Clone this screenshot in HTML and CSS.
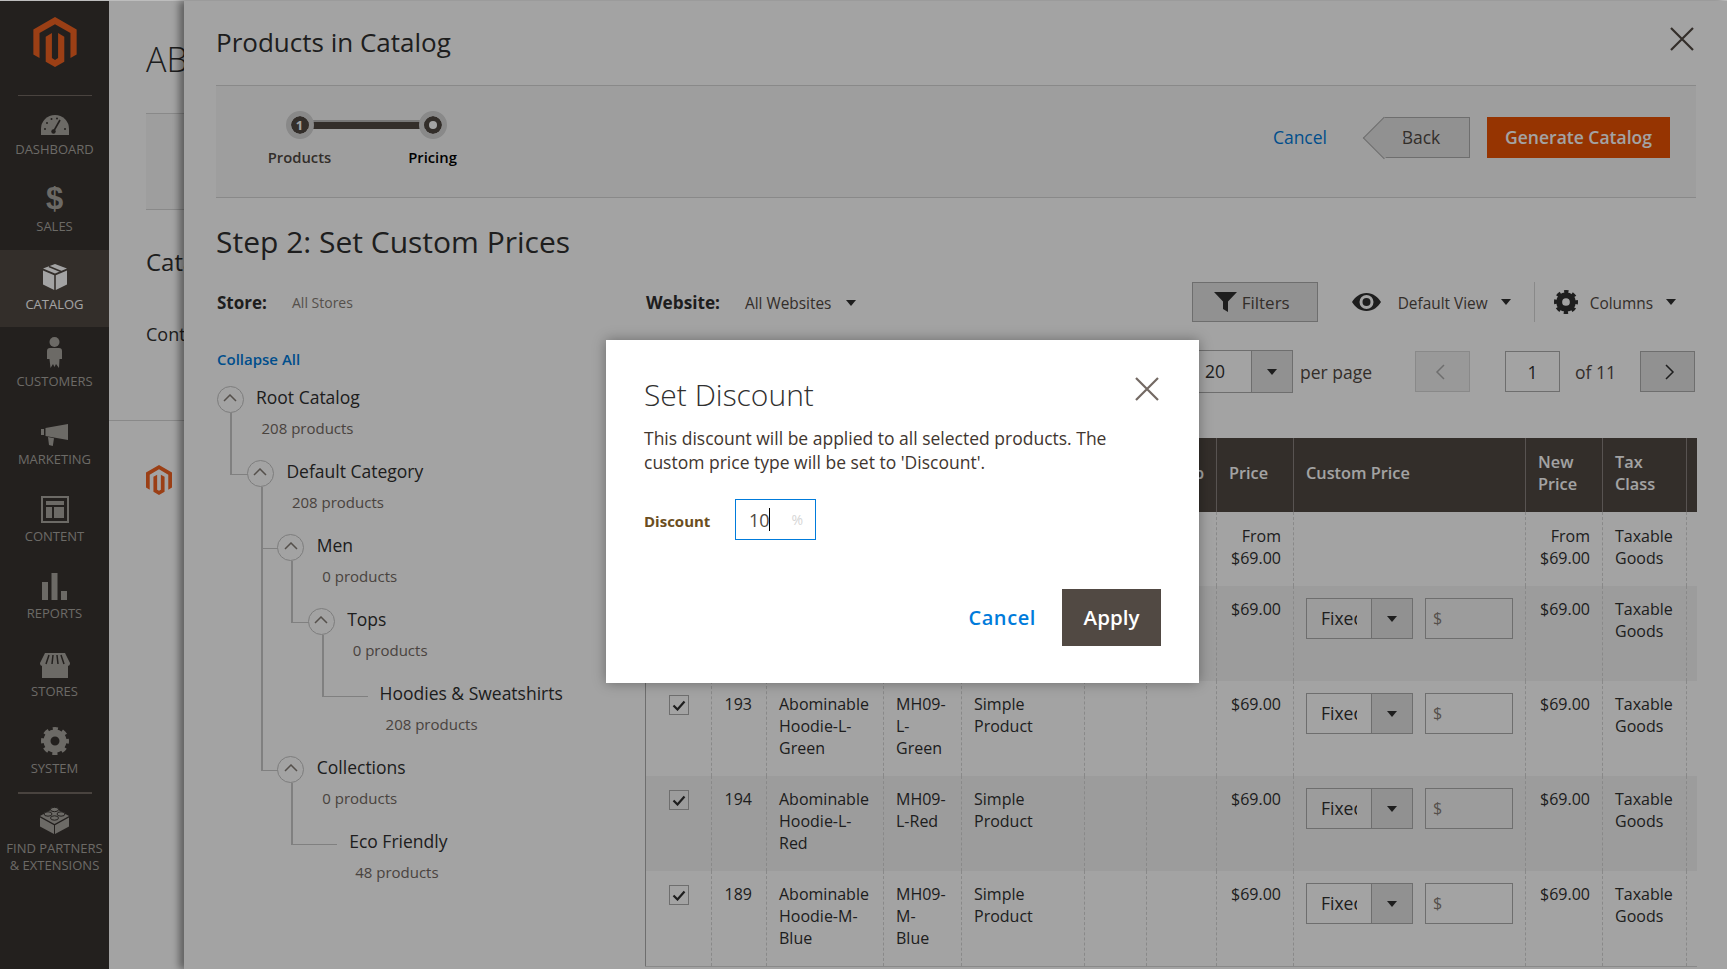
FILE: index.html
```html
<!DOCTYPE html>
<html>
<head>
  <meta charset="UTF-8">
  <title>Products in Catalog</title>
  <link rel="stylesheet" href="styles.css">
</head>
<body>
<div class="screen">
  <div class="topline"></div>
  <div class="layout">
    <!-- menu -->
    <nav class="sidebar">
      <div class="logo">
        <svg width="44" height="50" viewBox="1.6 0 20.8 24"><path fill="#f26322" d="M12 24l-4.455-2.572v-12l2.97-1.715v12.001l1.485.902 1.485-.902V7.713l2.97 1.715v12L12 24zM22.391 6v12l-2.97 1.714V7.713L12 3.43 4.574 7.713v12L1.609 18V6L12 0l10.391 6z"/></svg>
      </div>
      <a class="menu-item">
        <span class="menu-icon icon-up"><svg width="28" height="20" viewBox="0 0 28 20"><path fill="currentColor" d="M14 0A14 14 0 0 0 0 14v6h28v-6A14 14 0 0 0 14 0z"/><path stroke="#373330" stroke-width="1.6" d="M12.5 16.5L19 5"/><circle cx="12.5" cy="16.5" r="2.2" fill="#373330"/><g fill="#373330"><circle cx="4" cy="14" r="1"/><circle cx="6" cy="8" r="1"/><circle cx="10.500" cy="4" r="1"/><circle cx="16" cy="3.500" r="1"/><circle cx="24" cy="14" r="1"/></g></svg></span>
        <span class="menu-label">Dashboard</span>
      </a>
      <a class="menu-item">
        <span class="menu-icon"><span class="dollar">$</span></span>
        <span class="menu-label">Sales</span>
      </a>
      <a class="menu-item active">
        <span class="menu-icon icon-up"><svg width="24" height="26" viewBox="0 0 24 26"><path fill="currentColor" d="M12 0l12 4.500-12 5-12-5zM0 6.500l11.200 4.700V26L0 20.500zM24 6.500l-11.200 4.700V26L24 20.500z"/><path stroke="#514943" stroke-width="1.5" d="M6 2.500l12 5"/></svg></span>
        <span class="menu-label">Catalog</span>
      </a>
      <a class="menu-item">
        <span class="menu-icon"><svg width="15" height="31" viewBox="0 0 15 31"><circle cx="7.500" cy="5" r="5" fill="currentColor"/><path fill="currentColor" d="M3 11h9q3 0 3 3v8h-2.500L12 31l-3-4-1.500 3-1.500-3-2.500 4-1-9H0v-8q0-3 3-3z"/></svg></span>
        <span class="menu-label">Customers</span>
      </a>
      <a class="menu-item">
        <span class="menu-icon"><svg width="27" height="22" viewBox="0 0 27 22"><path fill="currentColor" d="M0 5h3v6H0zM4.500 4L27 0v16L4.500 12zM7 13l6 1.200-1.200 7.800-3.800-1z"/></svg></span>
        <span class="menu-label">Marketing</span>
      </a>
      <a class="menu-item">
        <span class="menu-icon"><svg width="28" height="27" viewBox="0 0 28 27"><path fill="currentColor" fill-rule="evenodd" d="M0 0h28v27H0zM2 2v23h24V2z"/><path fill="currentColor" d="M5 5h18v4H5zM5 11h6v11H5zM13 11h10v11H13z"/></svg></span>
        <span class="menu-label">Content</span>
      </a>
      <a class="menu-item">
        <span class="menu-icon"><svg width="25" height="27" viewBox="0 0 25 27"><path fill="currentColor" d="M0 9h6v18H0zM9.500 0h6v27h-6zM19 18h6v9h-6z"/></svg></span>
        <span class="menu-label">Reports</span>
      </a>
      <a class="menu-item">
        <span class="menu-icon"><svg width="30" height="25" viewBox="0 0 30 25"><path fill="currentColor" d="M2 12h26v13H2zM5 0h20l5 10q0 3-2.500 3h-25Q0 13 0 10z"/><path stroke="#373330" stroke-width="1.5" fill="none" d="M9 2L6 11M13 2l-1 9M17 2l1 9M21 2l3 9"/></svg></span>
        <span class="menu-label">Stores</span>
      </a>
      <a class="menu-item">
        <span class="menu-icon"><svg width="28" height="28" viewBox="0 0 28 28"><circle cx="14" cy="14" r="8" fill="none" stroke="currentColor" stroke-width="7"/><circle cx="14" cy="14" r="12" fill="none" stroke="currentColor" stroke-width="4" stroke-dasharray="5 4.420" stroke-dashoffset="2.500"/></svg></span>
        <span class="menu-label">System</span>
      </a>
      <a class="menu-item partners">
        <span class="menu-icon"><svg width="29" height="28" viewBox="0 0 29 28"><path fill="currentColor" d="M14.500 2L29 10 14.500 18 0 10zM0 11.500l14 7.800V28L0 20.500zM29 11.500l-14 7.800V28l14-7.500z"/><g fill="currentColor" stroke="#373330"><ellipse cx="14.500" cy="3.500" rx="4" ry="2.200"/><ellipse cx="8" cy="8" rx="4" ry="2.200"/><ellipse cx="21" cy="8" rx="4" ry="2.200"/><ellipse cx="14.500" cy="12" rx="4" ry="2.200"/></g></svg></span>
        <span class="menu-label">Find Partners<br>&amp; Extensions</span>
      </a>
    </nav>

    <!-- page under the slide panel -->
    <div class="behind">
      <h1 class="behind-title">ABC</h1>
      <div class="behind-box"></div>
      <h2 class="behind-sub">Catalog</h2>
      <p class="behind-text">Content</p>
      <div class="behind-footer">
        <svg width="26" height="30" viewBox="1.6 0 20.8 24"><path fill="#f26322" d="M12 24l-4.455-2.572v-12l2.97-1.715v12.001l1.485.902 1.485-.902V7.713l2.97 1.715v12L12 24zM22.391 6v12l-2.97 1.714V7.713L12 3.43 4.574 7.713v12L1.609 18V6L12 0l10.391 6z"/></svg>
      </div>
    </div>
  </div>

  <!-- slide panel -->
  <section class="panel">
    <header class="panel-head">
      <div class="panel-title">Products in Catalog</div>
      <svg class="panel-close" width="24" height="24" viewBox="0 0 24 24"><path d="M1 1l22 22M23 1L1 23" stroke="#514943" stroke-width="2.200" fill="none"/></svg>
    </header>

    <div class="steps-bar">
      <div class="steps">
        <div class="step done">
          <span class="step-dot"><span class="step-num">1</span></span>
          <span class="step-name">Products</span>
        </div>
        <div class="step current">
          <span class="step-dot"><span class="step-hole"></span></span>
          <span class="step-name">Pricing</span>
        </div>
      </div>
      <div class="step-actions">
        <a class="link-cancel">Cancel</a>
        <button class="btn-back">Back</button>
        <button class="btn-generate">Generate Catalog</button>
      </div>
    </div>

    <h2 class="step-title">Step 2: Set Custom Prices</h2>

    <div class="columns">
      <div class="col-tree">
        <div class="store-row">
          <b class="store-label">Store:</b>
          <span class="store-value">All Stores</span>
        </div>
        <a class="collapse-all">Collapse All</a>

        <ul class="tree">
          <li class="node">
            <div class="node-row"><span class="toggle"><svg width="14" height="8" viewBox="0 0 14 8"><path d="M1 7l6-6 6 6" fill="none" stroke="currentColor" stroke-width="1.500"/></svg></span><span class="node-name">Root Catalog</span></div>
            <div class="node-count">208 products</div>
            <ul class="tree-sub">
              <li class="node">
                <div class="node-row"><span class="toggle"><svg width="14" height="8" viewBox="0 0 14 8"><path d="M1 7l6-6 6 6" fill="none" stroke="currentColor" stroke-width="1.500"/></svg></span><span class="node-name">Default Category</span></div>
                <div class="node-count">208 products</div>
                <ul class="tree-sub">
                  <li class="node">
                    <div class="node-row"><span class="toggle"><svg width="14" height="8" viewBox="0 0 14 8"><path d="M1 7l6-6 6 6" fill="none" stroke="currentColor" stroke-width="1.500"/></svg></span><span class="node-name">Men</span></div>
                    <div class="node-count">0 products</div>
                    <ul class="tree-sub">
                      <li class="node">
                        <div class="node-row"><span class="toggle"><svg width="14" height="8" viewBox="0 0 14 8"><path d="M1 7l6-6 6 6" fill="none" stroke="currentColor" stroke-width="1.500"/></svg></span><span class="node-name">Tops</span></div>
                        <div class="node-count">0 products</div>
                        <ul class="tree-sub">
                          <li class="node leaf">
                            <div class="node-row"><span class="node-name">Hoodies &amp; Sweatshirts</span></div>
                            <div class="node-count">208 products</div>
                          </li>
                        </ul>
                      </li>
                    </ul>
                  </li>
                  <li class="node">
                    <div class="node-row"><span class="toggle"><svg width="14" height="8" viewBox="0 0 14 8"><path d="M1 7l6-6 6 6" fill="none" stroke="currentColor" stroke-width="1.500"/></svg></span><span class="node-name">Collections</span></div>
                    <div class="node-count">0 products</div>
                    <ul class="tree-sub">
                      <li class="node leaf">
                        <div class="node-row"><span class="node-name">Eco Friendly</span></div>
                        <div class="node-count">48 products</div>
                      </li>
                    </ul>
                  </li>
                </ul>
              </li>
            </ul>
          </li>
        </ul>
      </div>

      <div class="col-grid">
        <div class="toolbar">
          <b class="website-label">Website:</b>
          <span class="website-value">All Websites</span>
          <span class="caret website-caret"></span>
          <button class="btn-filters">
            <svg width="23" height="20" viewBox="0 0 23 20"><path fill="#303030" d="M0 0h23l-9 9.500V20l-5-3V9.500z"/></svg>
            Filters
          </button>
          <svg class="eye" width="29" height="18" viewBox="0 0 29 18"><path fill="#303030" fill-rule="evenodd" d="M14.500 0C8 0 3 4 0 9c3 5 8 9 14.500 9S26 14 29 9c-3-5-8-9-14.500-9zM14.500 2a7 7 0 1 1 0 14 7 7 0 0 1 0-14z"/><circle cx="14.500" cy="9" r="4" fill="#303030"/></svg>
          <span class="tool-text view-text">Default View</span>
          <span class="caret"></span>
          <span class="tool-divider"></span>
          <svg width="24" height="24" viewBox="0 0 28 28"><circle cx="14" cy="14" r="8" fill="none" stroke="#303030" stroke-width="7"/><circle cx="14" cy="14" r="12" fill="none" stroke="#303030" stroke-width="4" stroke-dasharray="5 4.420" stroke-dashoffset="2.500"/></svg>
          <span class="tool-text columns-text">Columns</span>
          <span class="caret"></span>
        </div>

        <div class="pager">
          <div class="per-page-select">
            <span class="per-page-value">20</span>
            <span class="select-arrow"><span class="caret"></span></span>
          </div>
          <span class="pager-text per-page">per page</span>
          <button class="pager-btn prev"><svg width="10" height="16" viewBox="0 0 10 16"><path d="M9 1L2 8l7 7" fill="none" stroke="#adadad" stroke-width="1.500"/></svg></button>
          <span class="page-input">1</span>
          <span class="pager-text page-of">of 11</span>
          <button class="pager-btn next"><svg width="10" height="16" viewBox="0 0 10 16"><path d="M1 1l7 7-7 7" fill="none" stroke="#303030" stroke-width="1.500"/></svg></button>
        </div>

        <table class="grid">
          <colgroup>
            <col style="width:66px"><col style="width:55px"><col style="width:117px"><col style="width:78px"><col style="width:123px"><col style="width:62px"><col style="width:70px"><col style="width:77px"><col style="width:232px"><col style="width:77px"><col style="width:84px"><col style="width:10px">
          </colgroup>
          <thead>
            <tr>
              <th></th><th></th><th></th><th></th><th></th><th></th><th>Group</th><th>Price</th><th>Custom Price</th><th>New Price</th><th>Tax Class</th><th></th>
            </tr>
          </thead>
          <tbody>
            <tr class="parent-row">
              <td></td><td></td><td></td><td></td><td></td><td></td><td></td>
              <td class="num">From $69.00</td><td></td><td class="num">From $69.00</td><td>Taxable Goods</td><td></td>
            </tr>
            <tr class="alt">
              <td></td><td></td><td></td><td></td><td></td><td></td><td></td>
              <td class="num">$69.00</td>
              <td><div class="price-edit"><span class="price-type"><span class="price-type-text">Fixed</span><span class="select-arrow"><span class="caret"></span></span></span><span class="price-input">$</span></div></td>
              <td class="num">$69.00</td><td>Taxable Goods</td><td></td>
            </tr>
            <tr>
              <td class="check-cell"><span class="check"><svg width="14" height="11" viewBox="0 0 14 11"><path d="M1.500 5.500L5.500 9.500 12.500 1.500" fill="none" stroke="#303030" stroke-width="2.200"/></svg></span></td>
              <td class="num id-cell">193</td><td>Abominable Hoodie-L-Green</td><td class="sku-cell">MH09-L-Green</td><td class="type-cell">Simple Product</td><td></td><td></td>
              <td class="num">$69.00</td>
              <td><div class="price-edit"><span class="price-type"><span class="price-type-text">Fixed</span><span class="select-arrow"><span class="caret"></span></span></span><span class="price-input">$</span></div></td>
              <td class="num">$69.00</td><td>Taxable Goods</td><td></td>
            </tr>
            <tr class="alt">
              <td class="check-cell"><span class="check"><svg width="14" height="11" viewBox="0 0 14 11"><path d="M1.500 5.500L5.500 9.500 12.500 1.500" fill="none" stroke="#303030" stroke-width="2.200"/></svg></span></td>
              <td class="num id-cell">194</td><td>Abominable Hoodie-L-Red</td><td class="sku-cell">MH09-L-Red</td><td class="type-cell">Simple Product</td><td></td><td></td>
              <td class="num">$69.00</td>
              <td><div class="price-edit"><span class="price-type"><span class="price-type-text">Fixed</span><span class="select-arrow"><span class="caret"></span></span></span><span class="price-input">$</span></div></td>
              <td class="num">$69.00</td><td>Taxable Goods</td><td></td>
            </tr>
            <tr>
              <td class="check-cell"><span class="check"><svg width="14" height="11" viewBox="0 0 14 11"><path d="M1.500 5.500L5.500 9.500 12.500 1.500" fill="none" stroke="#303030" stroke-width="2.200"/></svg></span></td>
              <td class="num id-cell">189</td><td>Abominable Hoodie-M-Blue</td><td class="sku-cell">MH09-M-Blue</td><td class="type-cell">Simple Product</td><td></td><td></td>
              <td class="num">$69.00</td>
              <td><div class="price-edit"><span class="price-type"><span class="price-type-text">Fixed</span><span class="select-arrow"><span class="caret"></span></span></span><span class="price-input">$</span></div></td>
              <td class="num">$69.00</td><td>Taxable Goods</td><td></td>
            </tr>
          </tbody>
        </table>
      </div>
    </div>
  </section>

  <div class="overlay"></div>

  <!-- discount popup -->
  <div class="dialog">
    <svg class="dialog-close" width="24" height="24" viewBox="0 0 24 24"><path d="M1 1l22 22M23 1L1 23" stroke="#736963" stroke-width="2.200" fill="none"/></svg>
    <h3 class="dialog-title">Set Discount</h3>
    <p class="dialog-text">This discount will be applied to all selected products. The custom price type will be set to 'Discount'.</p>
    <div class="dialog-field">
      <label class="dialog-label">Discount</label>
      <div class="discount-input">
        <span class="discount-value">10</span>
        <span class="discount-cursor"></span>
        <span class="discount-unit">%</span>
      </div>
    </div>
    <div class="dialog-actions">
      <a class="dialog-cancel">Cancel</a>
      <button class="btn-apply">Apply</button>
    </div>
  </div>
</div>
</body>
</html>
```

FILE: styles.css
```css
* {
  box-sizing: border-box;
}

html, body {
  margin: 0;
  padding: 0;
  height: 100%;
}

body {
  font-family: "Open Sans", "Noto Sans", sans-serif;
  color: #303030;
  background: #fff;
}

.screen {
  position: relative;
  width: 1727px;
  height: 969px;
  overflow: hidden;
  background: #fff;
}

.topline {
  height: 1px;
  background: #bdbdbd;
}

.layout {
  display: flex;
  height: 968px;
}

/* menu */
.sidebar {
  width: 109px;
  flex-shrink: 0;
  background: #373330;
  color: #aaa6a0;
}

.logo {
  height: 94px;
  padding-top: 16px;
}

.logo svg {
  display: block;
  margin: 0 auto;
}

.logo::after {
  content: "";
  display: block;
  width: 74px;
  height: 1px;
  margin: 28px auto 0;
  background: #736963;
}

.menu-item {
  display: flex;
  flex-direction: column;
  align-items: center;
  height: 77.4px;
}

.menu-item.active {
  background: #514943;
  color: #fff;
}

.menu-icon {
  height: 41px;
  flex-shrink: 0;
  display: flex;
  align-items: flex-end;
  justify-content: center;
}

.menu-icon.icon-up {
  padding-bottom: 1px;
}

.menu-label {
  flex-shrink: 0;
  font-size: 13px;
  line-height: 27.5px;
  text-transform: uppercase;
  text-align: center;
  white-space: nowrap;
}

.dollar {
  font-family: "Liberation Sans", sans-serif;
  font-weight: 700;
  font-size: 31px;
  line-height: 31px;
  margin-bottom: -1px;
}

.menu-item.partners {
  border-top: 2px solid #736963;
  width: 74px;
  height: auto;
  margin: 0 auto;
}

.partners .menu-icon {
  height: 40px;
}

.partners .menu-label {
  line-height: 17px;
  margin-top: 6px;
}

/* page behind the panel */
.behind {
  flex: 1;
  padding-left: 37px;
  position: relative;
}

.behind-title {
  margin: 36px 0 0;
  font-size: 34px;
  line-height: 44px;
  font-weight: 300;
}

.behind-box {
  height: 97px;
  margin-top: 32px;
  background: #f8f8f8;
  border-top: 1px solid #d6d6d6;
  border-bottom: 1px solid #d6d6d6;
}

.behind-sub {
  margin: 35px 0 0;
  font-size: 24px;
  line-height: 34px;
  font-weight: 400;
}

.behind-text {
  margin: 43px 0 0;
  font-size: 18px;
  line-height: 24px;
}

.behind-footer {
  margin: 74px 0 0 -37px;
  padding: 44px 0 0 37px;
  border-top: 1px solid #d6d6d6;
}

/* slide panel */
.panel {
  position: absolute;
  z-index: 0;
  left: 184px;
  right: 0;
  top: 1px;
  bottom: 0;
  padding: 0 31px 0 32px;
  background: #fff;
  box-shadow: -5px 0 7px rgba(0, 0, 0, .4);
}

.panel-head {
  height: 84px;
  display: flex;
  justify-content: space-between;
  padding-top: 24px;
}

.panel-title {
  font-size: 26px;
  line-height: 34px;
}

.panel-close {
  margin: 2px 2px 0 0;
}

.steps-bar {
  height: 113px;
  display: flex;
  justify-content: space-between;
  background: #f8f8f8;
  border-top: 1px solid #d6d6d6;
  border-bottom: 1px solid #d6d6d6;
}

.steps {
  display: flex;
  margin: 25px 0 0 17px;
}

.step {
  width: 133px;
  display: flex;
  flex-direction: column;
  align-items: center;
  position: relative;
}

.step.done::after {
  content: "";
  position: absolute;
  left: 66px;
  top: 11px;
  width: 133px;
  height: 7px;
  background: #514943;
  box-shadow: 0 -2px 0 #bbb;
}

.step-dot {
  width: 28px;
  height: 28px;
  border-radius: 50%;
  background: #514943;
  border: 5px solid #d6d6d6;
  background-clip: padding-box;
  display: flex;
  align-items: center;
  justify-content: center;
  position: relative;
  z-index: 1;
}

.step-num {
  color: #fff;
  font-size: 13px;
  font-weight: 700;
  line-height: 18px;
}

.step-hole {
  width: 8px;
  height: 8px;
  border-radius: 50%;
  background: #fff;
}

.step-name {
  margin-top: 8px;
  font-size: 14.8px;
  line-height: 20px;
  font-weight: 600;
  color: #514943;
}

.step.current .step-name {
  color: #000;
}

.step-actions {
  display: flex;
  align-items: flex-start;
  padding: 31px 26px 0 0;
}

.link-cancel {
  font-size: 17.5px;
  line-height: 40px;
  font-weight: 500;
  color: #007bdb;
  margin-right: 57px;
}

.btn-back {
  position: relative;
  width: 86px;
  height: 41px;
  padding: 0 11px 2px 0;
  border: 1px solid #adadad;
  border-left: 0;
  background: #e3e3e3;
  color: #514943;
  font: 400 17.5px "Open Sans", sans-serif;
  margin-right: 17px;
}

.btn-back::before {
  content: "";
  position: absolute;
  left: -15px;
  top: 4.5px;
  width: 29px;
  height: 29px;
  background: #e3e3e3;
  border-left: 1px solid #adadad;
  border-bottom: 1px solid #adadad;
  transform: rotate(45deg);
}

.btn-generate {
  width: 183px;
  height: 41px;
  padding: 0 0 2px;
  border: 0;
  background: #eb5202;
  color: #fff;
  font: 600 17.5px "Open Sans", sans-serif;
}

.step-title {
  margin: 24px 0 20px;
  font-size: 30px;
  line-height: 40px;
  font-weight: 400;
}

.columns {
  display: flex;
}

/* category tree */
.col-tree {
  width: 429px;
  flex-shrink: 0;
}

.store-row {
  height: 40px;
  display: flex;
  align-items: center;
}

.store-label {
  font-size: 17px;
  font-weight: 700;
  width: 75px;
  margin-left: 1px;
}

.store-value {
  font-size: 14px;
  color: #857d76;
}

.collapse-all {
  display: block;
  margin: 27px 0 0 1px;
  font-size: 15px;
  line-height: 20px;
  font-weight: 600;
  color: #007bdb;
}

.tree, .tree-sub {
  list-style: none;
  margin: 0;
  padding: 0;
}

.tree {
  margin: 16px 0 0 0.5px;
}

.node {
  position: relative;
}

.tree-sub .node {
  margin-left: 30.4px;
}

.node-row {
  height: 28px;
  display: flex;
  align-items: center;
}

.toggle {
  width: 27px;
  height: 27px;
  flex-shrink: 0;
  border: 1.5px solid #c4c4c4;
  border-radius: 50%;
  color: #857d76;
  display: flex;
  align-items: center;
  justify-content: center;
  padding-bottom: 3px;
  background: #fff;
  position: relative;
  z-index: 1;
}

.node-name {
  margin-left: 12.5px;
  font-size: 17.5px;
  line-height: 28px;
  white-space: nowrap;
  position: relative;
  top: -2px;
}

.node-count {
  height: 46px;
  padding: 3px 0 0 45px;
  font-size: 15px;
  line-height: 24px;
  color: #736963;
}

.leaf .node-name {
  margin-left: 41.5px;
}

.leaf .node-count {
  padding-left: 47.5px;
}

/* connector lines of the tree */
.tree-sub .node::before {
  content: "";
  position: absolute;
  left: -16.5px;
  top: -46px;
  width: 17px;
  height: 61px;
  border-left: 2px solid #c8c8c8;
  border-bottom: 1px solid #c8c8c8;
}

.tree-sub .node + .node::before {
  top: 0;
  height: 15px;
}

.tree-sub .node:not(:last-child)::after {
  content: "";
  position: absolute;
  left: -16.5px;
  top: 0;
  bottom: 0;
  border-left: 2px solid #c8c8c8;
}

.tree-sub .leaf::before {
  width: 44px;
}

/* grid side */
.col-grid {
  flex: 1;
  min-width: 0;
}

.toolbar {
  height: 40px;
  display: flex;
  align-items: center;
}

.website-label {
  font-size: 17.2px;
  font-weight: 700;
  margin-left: 1px;
  width: 99px;
}

.website-value {
  padding-top: 2px;
  font-size: 15.4px;
  color: #514943;
}

.caret {
  display: inline-block;
  width: 0;
  height: 0;
  border-left: 5px solid transparent;
  border-right: 5px solid transparent;
  border-top: 6px solid #303030;
}

.website-caret {
  margin: 2px 0 0 15px;
}

.btn-filters {
  margin-left: auto;
  width: 126px;
  height: 40px;
  display: flex;
  align-items: center;
  justify-content: center;
  gap: 5px;
  border: 1px solid #adadad;
  background: #e3e3e3;
  color: #514943;
  font: 400 17px "Open Sans", sans-serif;
  padding: 0 6px 0 0;
}

.eye {
  margin: 0 17px 0 34px;
}

.tool-text {
  padding-top: 2px;
  font-size: 15.4px;
  color: #514943;
}

.view-text {
  margin-right: 13px;
}

.tool-divider {
  width: 1px;
  height: 40px;
  margin: 0 19px 0 23px;
  background: #d6d6d6;
}

.columns-text {
  margin: 0 13px 0 12px;
}

.toolbar > .caret:last-child {
  margin-right: 20px;
}

.pager {
  height: 43px;
  margin-top: 28px;
  display: flex;
  align-items: center;
  padding-left: 548px;
}

.per-page-select {
  width: 100px;
  height: 43px;
  display: flex;
  justify-content: space-between;
  border: 1px solid #adadad;
}

.per-page-value {
  font-size: 17.5px;
  line-height: 41px;
  padding-left: 11px;
}

.select-arrow {
  width: 41px;
  display: flex;
  align-items: center;
  justify-content: center;
  background: #e3e3e3;
  border-left: 1px solid #adadad;
}

.pager-text {
  font-size: 17.5px;
  color: #514943;
}

.per-page {
  margin-left: 7px;
  width: 115px;
}

.pager-btn {
  width: 55px;
  height: 41px;
  padding: 0;
  border: 1px solid #adadad;
  background: #e3e3e3;
  display: flex;
  align-items: center;
  justify-content: center;
}

.pager-btn.prev {
  padding-right: 6px;
  background: #f0f0f0;
  border-color: #d6d6d6;
}

.pager-btn.next {
  padding-left: 4px;
}

.page-input {
  width: 55px;
  height: 41px;
  margin-left: 35px;
  border: 1px solid #adadad;
  text-align: center;
  font-size: 17.5px;
  line-height: 41px;
}

.page-of {
  margin-left: 15px;
  width: 65px;
}

/* table */
.grid {
  margin-top: 45px;
  width: 1051px;
  table-layout: fixed;
  border-collapse: collapse;
  font-size: 16px;
  line-height: 22px;
  border-left: 1px solid #adadad;
  border-bottom: 1px solid #d6d6d6;
}

.grid th {
  height: 74px;
  padding: 0 12px 4px;
  text-align: left;
  font-size: 16.3px;
  font-weight: 600;
  color: #fff;
  background: #514943;
  border-left: 1px solid #8a837f;
}

.grid th:nth-child(7) {
  padding-left: 8px;
}

.grid td {
  height: 95px;
  padding: 12px;
  vertical-align: top;
  border-left: 1px dashed #d6d6d6;
  word-wrap: break-word;
}

.grid .parent-row td {
  height: 74px;
  padding-top: 13px;
}

.grid tr.alt td {
  background: #f5f5f5;
}

.grid .num {
  text-align: right;
}

.grid .id-cell {
  padding-right: 14px;
}

.grid .sku-cell {
  padding-right: 14px;
}

.grid .type-cell {
  padding-right: 20px;
}

.grid td.check-cell {
  padding: 14px 0 0 23px;
}

.check {
  width: 20px;
  height: 20px;
  display: flex;
  align-items: center;
  justify-content: center;
  border: 1px solid #adadad;
}

.price-edit {
  display: flex;
  justify-content: space-between;
  width: 207px;
}

.price-type {
  width: 107px;
  height: 41px;
  display: flex;
  border: 1px solid #adadad;
}

.price-type-text {
  width: 64px;
  padding-left: 14px;
  font-size: 17.5px;
  line-height: 39px;
  overflow: hidden;
  flex-shrink: 0;
  white-space: nowrap;
  clip-path: inset(0 14px 0 0);
}

.price-type .select-arrow {
  flex: 1;
  width: auto;
}

.price-input {
  width: 88px;
  height: 41px;
  padding-left: 7px;
  border: 1px solid #adadad;
  font-size: 16px;
  line-height: 39px;
  color: #857d76;
}

/* overlay and popup */
.overlay {
  position: absolute;
  z-index: 1;
  left: 0;
  right: 0;
  top: 1px;
  bottom: 0;
  background: rgba(0, 0, 0, .36);
}

.dialog {
  position: absolute;
  z-index: 2;
  left: 606px;
  top: 340px;
  width: 593px;
  height: 343px;
  padding: 35px 38px 0;
  background: #fff;
  box-shadow: 0 0 12px rgba(0, 0, 0, .35);
}

.dialog-close {
  position: absolute;
  right: 40px;
  top: 37px;
}

.dialog-title {
  margin: 0;
  font-size: 30px;
  line-height: 40px;
  font-weight: 300;
}

.dialog-text {
  margin: 12px 0 0;
  font-size: 17.5px;
  line-height: 23.5px;
  color: #41362f;
}

.dialog-field {
  margin-top: 25px;
  display: flex;
  align-items: center;
}

.dialog-label {
  width: 91px;
  padding-top: 2px;
  font-size: 15px;
  font-weight: 700;
  color: #6b4e1e;
}

.discount-input {
  width: 81px;
  height: 41px;
  display: flex;
  align-items: center;
  padding-left: 13px;
  border: 1px solid #007bdb;
  font-size: 18px;
  color: #514943;
}

.discount-value {
  line-height: 24px;
}

.discount-cursor {
  width: 1px;
  height: 23px;
  background: #000;
  margin-left: -1px;
}

.discount-unit {
  margin-left: 22px;
  font-size: 14px;
  color: #d6d6d6;
}

.dialog-actions {
  display: flex;
  justify-content: flex-end;
  align-items: center;
  margin-top: 49px;
}

.dialog-cancel {
  font-size: 20px;
  font-weight: 600;
  letter-spacing: .6px;
  color: #007bdb;
  margin-right: 26px;
}

.btn-apply {
  width: 99px;
  height: 57px;
  padding: 0 0 2px;
  border: 0;
  background: #514943;
  color: #fff;
  font: 600 20.5px "Open Sans", sans-serif;
}
```
